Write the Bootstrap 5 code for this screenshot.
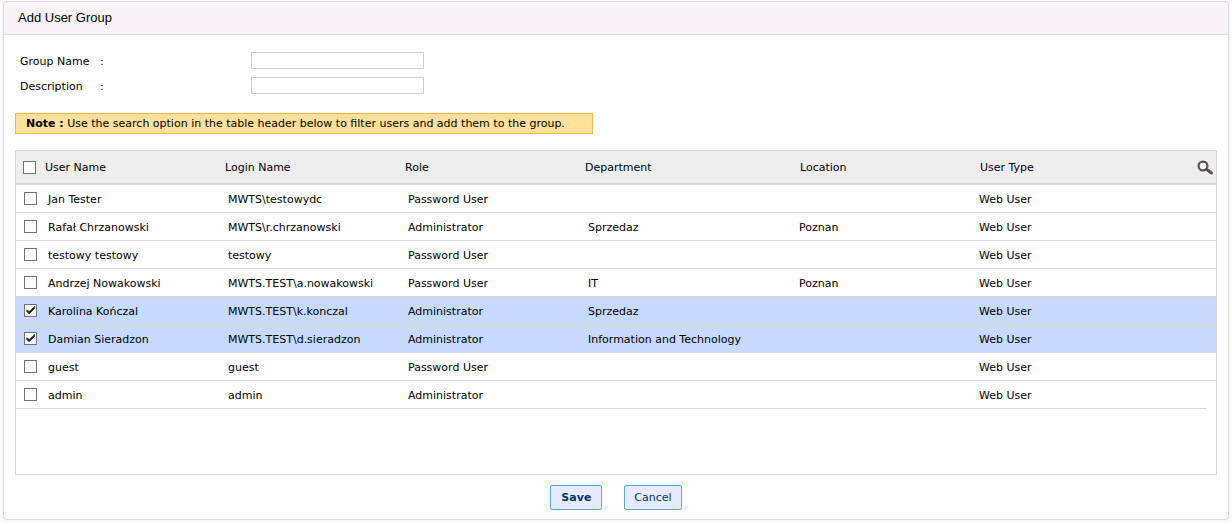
<!DOCTYPE html>
<html lang="en">
<head>
<meta charset="utf-8">
<meta name="viewport" content="width=device-width, initial-scale=1">
<title>Add User Group</title>
<link href="https://cdn.jsdelivr.net/npm/bootstrap@5.3.0/dist/css/bootstrap.min.css" rel="stylesheet">
<style>
  body { font: 11px/16px Verdana, "DejaVu Sans", sans-serif; color: #000; background: #fff; }
  .group-panel { margin: 1px 3px 4px; border: 1px solid #dcdcdc; border-radius: 4px; box-shadow: 0 1px 3px 1px #f5f0f4; }
  .panel-title { font: 13px/18px "Liberation Sans", Arial, sans-serif; background: #f7f3f7; border-bottom: 1px solid #dcdcdc; padding: 7px 14px; border-radius: 3px 3px 0 0; color: #000; }
  .panel-content { padding: 17px 11px 9px; }
  .field-row { height: 17px; margin-bottom: 8px; padding-left: 5px; }
  .field-row label { width: 80px; padding-top: 2px; }
  .field-row .colon { width: 151px; padding-top: 2px; }
  .field-input { width: 173px; height: 17px; padding: 0 3px; border: 1px solid #ccc; border-radius: 0; font-size: 11px; }
  .note-box { width: 578px; max-width: 100%; background: #ffe19c; border: 1px solid #efb73e; padding: 2px 10px 1px; margin: 19px 0 16px; color: #000; }
  .users-frame { border: 1px solid #d6d6d6; height: 325px; overflow: hidden; }
  .users-table { table-layout: fixed; border-collapse: separate; border-spacing: 0; color: #000; margin: 0; width: 100%; }
  .users-table th { font-weight: 400; background: #eee; height: 34px; padding: 2px 0 0; border-bottom: 2px solid #d6d6d6; }
  .users-table td { height: 28px; padding: 2px 0 0 3px; border-bottom: 1px solid #d6d6d6; white-space: nowrap; }
  .users-table td.pick { padding: 0 0 0 8px; }
  .users-table th.pick { padding: 1px 0 0 7px; }
  .users-table th.shifted { padding-left: 4px; }
  .users-table tr.chosen td { background: #c6dbff; }
  .users-table tbody tr:last-child td:last-child { border-bottom: 0; }
  .col-pick { width: 29px; }
  .col-text { width: 15%; }
  .col-wide { width: 211px; }
  .col-edge { width: 9px; }
  .tick { appearance: none; display: block; width: 13px; height: 13px; margin: 0; background: #fff center / 11px 11px no-repeat; border: 1px solid #707070; border-radius: 0; }
  .tick:checked { background-image: url("data:image/svg+xml,%3Csvg xmlns='http://www.w3.org/2000/svg' viewBox='0 0 11 11'%3E%3Cpath d='M1.8 4.8V6.6L4.2 8.8 9.6 3.4V1.4L4.2 6.6Z' fill='%23222' stroke='%23222' stroke-width='.8'/%3E%3C/svg%3E"); }
  .find-btn { line-height: 0; margin-right: 3px; }
  .form-btn { min-width: 52px; height: 25px; border: 1px solid #57a5e8; border-radius: 2px; background: #e7ebff; color: #036; font-size: 11px; line-height: 16px; padding: 2px 9px 1px; }
  .form-btn:hover { background: #d9e0ff; color: #036; border-color: #57a5e8; }
  .form-actions { margin-top: 10px; gap: 22px; }
</style>
</head>
<body>
<form class="group-panel" onsubmit="return false">
  <h1 class="panel-title m-0">Add User Group</h1>
  <div class="panel-content">
    <div class="field-row d-flex align-items-center">
      <label for="groupName">Group Name</label><span class="colon">:</span>
      <input class="field-input" type="text" id="groupName">
    </div>
    <div class="field-row d-flex align-items-center">
      <label for="description">Description</label><span class="colon">:</span>
      <input class="field-input" type="text" id="description">
    </div>
    <div class="note-box"><strong>Note :</strong> Use the search option in the table header below to filter users and add them to the group.</div>
    <div class="users-frame">
      <table class="users-table align-middle">
        <colgroup><col class="col-pick"><col class="col-text"><col class="col-text"><col class="col-text"><col class="col-wide"><col class="col-text"><col><col class="col-edge"></colgroup>
        <thead>
          <tr>
            <th class="pick"><input class="tick" type="checkbox" aria-label="Select all users"></th>
            <th>User Name</th><th>Login Name</th><th>Role</th><th>Department</th><th class="shifted">Location</th>
            <th class="shifted" colspan="2">
              <div class="d-flex justify-content-between align-items-center">
                <span>User Type</span>
                <button type="button" class="btn find-btn border-0 p-0" aria-label="Search">
                  <svg width="16" height="16" viewBox="0 0 16 16" fill="none" stroke="#5a504e"><circle cx="6" cy="6" r="4.4" fill="#fff" stroke-width="2.2"/><path d="M9.6 9.2 14.4 13" stroke-width="3" stroke-linecap="round"/></svg>
                </button>
              </div>
            </th>
          </tr>
        </thead>
        <tbody>
          <tr><td class="pick"><input class="tick" type="checkbox" aria-label="Jan Tester"></td><td>Jan Tester</td><td>MWTS\testowydc</td><td>Password User</td><td></td><td></td><td>Web User</td><td></td></tr>
          <tr><td class="pick"><input class="tick" type="checkbox" aria-label="Rafał Chrzanowski"></td><td>Rafał Chrzanowski</td><td>MWTS\r.chrzanowski</td><td>Administrator</td><td>Sprzedaz</td><td>Poznan</td><td>Web User</td><td></td></tr>
          <tr><td class="pick"><input class="tick" type="checkbox" aria-label="testowy testowy"></td><td>testowy testowy</td><td>testowy</td><td>Password User</td><td></td><td></td><td>Web User</td><td></td></tr>
          <tr><td class="pick"><input class="tick" type="checkbox" aria-label="Andrzej Nowakowski"></td><td>Andrzej Nowakowski</td><td>MWTS.TEST\a.nowakowski</td><td>Password User</td><td>IT</td><td>Poznan</td><td>Web User</td><td></td></tr>
          <tr class="chosen"><td class="pick"><input class="tick" type="checkbox" checked aria-label="Karolina Kończal"></td><td>Karolina Kończal</td><td>MWTS.TEST\k.konczal</td><td>Administrator</td><td>Sprzedaz</td><td></td><td>Web User</td><td></td></tr>
          <tr class="chosen"><td class="pick"><input class="tick" type="checkbox" checked aria-label="Damian Sieradzon"></td><td>Damian Sieradzon</td><td>MWTS.TEST\d.sieradzon</td><td>Administrator</td><td>Information and Technology</td><td></td><td>Web User</td><td></td></tr>
          <tr><td class="pick"><input class="tick" type="checkbox" aria-label="guest"></td><td>guest</td><td>guest</td><td>Password User</td><td></td><td></td><td>Web User</td><td></td></tr>
          <tr><td class="pick"><input class="tick" type="checkbox" aria-label="admin"></td><td>admin</td><td>admin</td><td>Administrator</td><td></td><td></td><td>Web User</td><td></td></tr>
        </tbody>
      </table>
    </div>
    <div class="form-actions d-flex justify-content-center">
      <button type="submit" class="btn form-btn fw-bold">Save</button>
      <button type="button" class="btn form-btn">Cancel</button>
    </div>
  </div>
</form>
<script src="https://cdn.jsdelivr.net/npm/bootstrap@5.3.0/dist/js/bootstrap.bundle.min.js"></script>
</body>
</html>
